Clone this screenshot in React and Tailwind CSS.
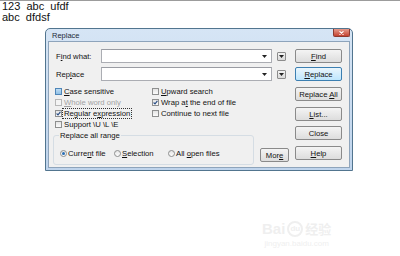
import React from 'react';

const ui = "font-['Liberation_Sans',Arial,sans-serif] text-[7.7px] leading-[9px] text-[#111]";

function Arrow() {
    return (
        <svg width="5" height="3" viewBox="0 0 5 3">
            <path d="M0 0 H5 L2.5 3 Z" fill="#222" />
        </svg>
    );
}

function Check({ checked, hot, dim }) {
    const box = hot
        ? 'border-[#4f86b8] bg-gradient-to-b from-[#bfdcf3] to-[#8fc0e6]'
        : dim
        ? 'border-[#b8b8b8] bg-[#f4f4f4]'
        : 'border-[#8e8f8f] bg-gradient-to-b from-[#e4e4e4] to-[#fbfbfb]';
    return (
        <span className={`w-[7px] h-[7px] border shrink-0 flex items-center justify-center ${box}`}>
            {checked && (
                <svg width="5" height="5" viewBox="0 0 5 5">
                    <path d="M0.6 2.5 L2 3.9 L4.4 0.8" stroke="#2b4f86" strokeWidth="1.1" fill="none" />
                </svg>
            )}
        </span>
    );
}

function Radio({ on }) {
    return (
        <span className="w-[7px] h-[7px] rounded-full border border-[#8e8f8f] bg-gradient-to-b from-[#e6e6e6] to-[#fcfcfc] shrink-0 flex items-center justify-center">
            {on && <span className="w-[3px] h-[3px] rounded-full bg-[#2a6fb6]" />}
        </span>
    );
}

function Btn({ children, primary, className = '' }) {
    const look = primary
        ? 'border-[#3c7fb1] bg-gradient-to-b from-[#eaf6fd] to-[#bee6fd]'
        : 'border-[#8a8a8a] bg-gradient-to-b from-[#f4f4f4] to-[#dddddd]';
    return (
        <div className={`h-[14px] border rounded-[2px] flex items-center justify-center ${look} ${className}`}>
            <span>{children}</span>
        </div>
    );
}

function Combo() {
    return (
        <div className="flex items-center">
            <div className="w-[171px] h-[14px] bg-white border border-[#abadb3] border-t-[#9a9ca3] flex items-center justify-end pr-[4px]">
                <Arrow />
            </div>
            <div className="ml-[5px] w-[9px] h-[9px] border border-[#8c8c8c] rounded-[1px] bg-gradient-to-b from-[#f4f4f4] to-[#d9d9d9] flex items-center justify-center">
                <Arrow />
            </div>
        </div>
    );
}

function CheckRow({ children, checked, hot, dim, focus }) {
    return (
        <div className="h-[11px] flex items-center gap-[1px]">
            <Check checked={checked} hot={hot} dim={dim} />
            <span className={`${dim ? 'text-[#a3a3a3]' : ''} ${focus ? 'outline outline-1 outline-dotted outline-[#333] px-[1px]' : 'px-[1px]'}`}>
                {children}
            </span>
        </div>
    );
}

export default function App() {
    return (
        <div className="w-[400px] h-[256px] bg-white overflow-hidden relative">
            <div className="border-t border-[#9c9c9c]" />
            <div className="pl-[2px] font-['Liberation_Sans',Arial,sans-serif] text-[11px] leading-[11px] text-[#111]">
                <div>123&nbsp; abc&nbsp; ufdf</div>
                <div>abc&nbsp; dfdsf</div>
            </div>

            <div className={`ml-[45px] mt-[5px] w-[308px] border border-[#52758f] rounded-t-[5px] bg-gradient-to-b from-[#d6e5f5] to-[#bfd4ec] ${ui}`}>
                <div className="h-[12px] flex items-start justify-between">
                    <span className="pl-[6px] pt-[2px] text-[7.5px] text-[#1e2a3a]">Replace</span>
                    <div className="mr-[2px] w-[17px] h-[8px] rounded-b-[2px] border border-[#8c3a30] border-t-0 bg-gradient-to-b from-[#e49a8c] to-[#c4412f] flex items-center justify-center">
                        <svg width="5" height="4" viewBox="0 0 5 4">
                            <path d="M0.5 0.3 L4.5 3.7 M4.5 0.3 L0.5 3.7" stroke="#fff" strokeWidth="1.1" />
                        </svg>
                    </div>
                </div>

                <div className="mx-[2px] mb-[2px] border border-[#8ea4bb] bg-[#f0f0f0] flex pl-[7px] pr-[7px] pt-[7px] pb-[2px]">
                    <div className="w-[233px] flex flex-col">
                        <div className="flex items-center">
                            <span className="w-[45px]">F<u>i</u>nd what:</span>
                            <Combo />
                        </div>
                        <div className="flex items-center mt-[4px]">
                            <span className="w-[45px]">Rep<u>l</u>ace</span>
                            <Combo />
                        </div>

                        <div className="flex mt-[5px] -ml-[1px]">
                            <div className="w-[97px] flex flex-col">
                                <CheckRow hot><u>C</u>ase sensitive</CheckRow>
                                <CheckRow dim><u>W</u>hole word only</CheckRow>
                                <CheckRow checked focus>Regular e<u>x</u>pression</CheckRow>
                                <CheckRow>Support \U \L \E</CheckRow>
                            </div>
                            <div className="flex flex-col">
                                <CheckRow><u>U</u>pward search</CheckRow>
                                <CheckRow checked>Wrap a<u>t</u> the end of file</CheckRow>
                                <CheckRow>Continue to next file</CheckRow>
                            </div>
                        </div>

                        <div className="flex mt-[5px] -ml-[3px]">
                            <div className="w-[201px] border border-[#d5dde4] rounded-[3px] px-[6px] pb-[6px]">
                                <div className="-mt-[5px] -ml-[1px] w-fit px-[1px] bg-[#f0f0f0]">Replace all range</div>
                                <div className="flex mt-[9px] h-[9px] items-center">
                                    <div className="w-[54px] flex items-center gap-[1px]">
                                        <Radio on />
                                        <span>Curre<u>n</u>t file</span>
                                    </div>
                                    <div className="w-[54px] flex items-center gap-[1px]">
                                        <Radio />
                                        <span><u>S</u>election</span>
                                    </div>
                                    <div className="flex items-center gap-[1px]">
                                        <Radio />
                                        <span>All <u>o</u>pen files</span>
                                    </div>
                                </div>
                            </div>
                            <Btn className="ml-[6px] w-[29px] self-end mb-[3px]">Mor<u>e</u></Btn>
                        </div>
                    </div>

                    <div className="ml-[6px] w-[47px] flex flex-col">
                        <Btn><u>F</u>ind</Btn>
                        <Btn primary className="mt-[4px]"><u>R</u>eplace</Btn>
                        <Btn className="mt-[6px]">Replace <u>A</u>ll</Btn>
                        <Btn className="mt-[6px]"><u>L</u>ist...</Btn>
                        <Btn className="mt-[5px]">Close</Btn>
                        <Btn className="mt-[6px]"><u>H</u>elp</Btn>
                    </div>
                </div>
            </div>

            <div className="absolute left-[262px] top-[221px] flex flex-col items-center text-[#efefef] font-['Liberation_Sans',Arial,sans-serif]">
                <div className="flex items-center gap-[2px] text-[15px] leading-[16px] font-bold">
                    <span>Bai</span>
                    <span className="w-[16px] h-[16px] rounded-full border-2 border-[#efefef] text-[8px] leading-[12px] text-center">du</span>
                    <span className="font-['Noto_Sans_CJK_SC',sans-serif] text-[13px]">经验</span>
                </div>
                <div className="text-[8px] leading-[10px] mt-[2px]">jingyan.baidu.com</div>
            </div>
        </div>
    );
}
